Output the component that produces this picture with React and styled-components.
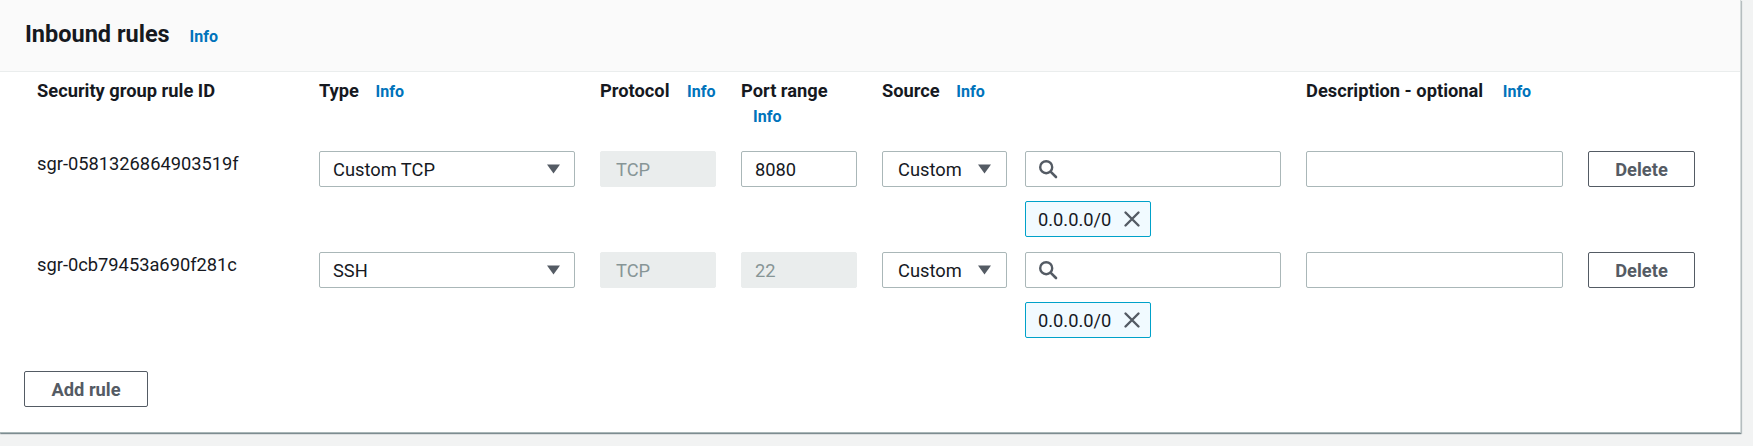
import React from "react";
import styled, { createGlobalStyle } from "styled-components";

const GlobalStyle = createGlobalStyle`
  html, body {
    margin: 0;
    padding: 0;
    background: #f2f3f3;
  }
  body {
    font-family: Roboto, "Liberation Sans", sans-serif;
    color: #16191f;
    font-size: 18.3px;
    line-height: 25px;
  }
`;

const Page = styled.div`
  width: 1753px;
  height: 446px;
  overflow: hidden;
  background: #f2f3f3;
`;

const Panel = styled.section`
  width: 1741px;
  background: #ffffff;
  box-shadow: 0 1px 1px 0 rgba(0, 28, 36, 0.35), 1px 1px 1px 0 rgba(0, 28, 36, 0.2);
  border-bottom: 1px solid #aab7b8;
  border-right: 1px solid #d5dbdb;
  box-sizing: border-box;
`;

const Header = styled.header`
  height: 72px;
  box-sizing: border-box;
  background: #fafafa;
  border-bottom: 1px solid #eaeded;
  display: flex;
  align-items: center;
  padding-left: 25px;
`;

const Title = styled.h2`
  margin: 0;
  font-size: 23.5px;
  line-height: 28px;
  font-weight: 700;
  color: #16191f;
`;

const Info = styled.a`
  display: inline-block;
  margin-left: ${(p) => p.$offset ?? 12}px;
  font-size: 16px;
  font-weight: 700;
  color: #0073bb;
  text-decoration: none;
  cursor: pointer;
`;

const Body = styled.div`
  padding: 6px 0 25px 0;
`;

const Table = styled.div`
  padding-left: 37px;
  display: flex;
  flex-direction: column;
`;

const Row = styled.div`
  display: grid;
  grid-template-columns: 257px 256px 116px 116px 399px 257px 107px;
  column-gap: 25px;
  align-items: start;
  margin-top: ${(p) => p.$gap || 0}px;
`;

const HeadCell = styled.div`
  font-weight: 700;
  white-space: ${(p) => (p.$stack ? "normal" : "nowrap")};
  line-height: 25px;
  height: ${(p) => (p.$stack ? 50 : 25)}px;
`;

const IdText = styled.div`
  line-height: 25px;
`;

const Field = styled.div`
  height: 36px;
  box-sizing: border-box;
  border: 1px solid ${(p) => (p.$disabled ? "#eaeded" : "#aab7b8")};
  background: ${(p) => (p.$disabled ? "#eaeded" : "#ffffff")};
  color: ${(p) => (p.$disabled ? "#879596" : "#16191f")};
  border-radius: 2px;
  display: flex;
  align-items: center;
  padding: 0 ${(p) => p.$padRight ?? 13}px 0 ${(p) => p.$padLeft ?? 13}px;
  gap: 8px;
`;

const FieldText = styled.span`
  flex: 1;
  white-space: nowrap;
`;

const SourceCell = styled.div`
  display: grid;
  grid-template-columns: 125px 256px;
  column-gap: 18px;
  row-gap: 14px;
`;

const Token = styled.div`
  grid-column: 2;
  justify-self: start;
  height: 36px;
  box-sizing: border-box;
  width: 126px;
  border: 1px solid #00a1c9;
  background: #f1faff;
  border-radius: 2px;
  display: flex;
  align-items: center;
  padding: 0 9px 0 12px;
  justify-content: space-between;
  color: #16191f;
`;

const Button = styled.button`
  height: 36px;
  box-sizing: border-box;
  border: 1px solid #545b64;
  border-radius: 2px;
  background: #ffffff;
  color: #545b64;
  font-family: Roboto, "Liberation Sans", sans-serif;
  font-size: 18.3px;
  font-weight: 700;
  padding: 0 ${(p) => p.$padX || 26}px;
  width: ${(p) => (p.$width ? `${p.$width}px` : "auto")};
  cursor: pointer;
`;

const Footer = styled.div`
  margin-top: 33px;
  padding-left: 24px;
`;

const Caret = () => (
  <svg width="13" height="10" viewBox="0 0 13 10" aria-hidden="true">
    <polygon points="0,0.5 13,0.5 6.5,9.5" fill="#545b64" />
  </svg>
);

const SearchIcon = () => (
  <svg width="20" height="20" viewBox="0 0 20 20" aria-hidden="true">
    <circle cx="8.2" cy="8.2" r="6" fill="none" stroke="#545b64" strokeWidth="2.4" />
    <line x1="12.8" y1="12.8" x2="18" y2="18" stroke="#545b64" strokeWidth="2.6" strokeLinecap="round" />
  </svg>
);

const CloseIcon = () => (
  <svg width="18" height="18" viewBox="0 0 18 18" aria-hidden="true">
    <path d="M2.5 2.5 L15.5 15.5 M15.5 2.5 L2.5 15.5" stroke="#545b64" strokeWidth="2.4" strokeLinecap="round" />
  </svg>
);

const rules = [
  { id: "sgr-0581326864903519f", type: "Custom TCP", protocol: "TCP", port: "8080", portDisabled: false },
  { id: "sgr-0cb79453a690f281c", type: "SSH", protocol: "TCP", port: "22", portDisabled: true },
];

export default function App() {
  return (
    <Page>
      <GlobalStyle />
      <Panel>
        <Header>
          <Title>
            Inbound rules <Info $offset={14}>Info</Info>
          </Title>
        </Header>
        <Body>
          <Table>
            <Row>
              <HeadCell>Security group rule ID</HeadCell>
              <HeadCell>
                Type <Info>Info</Info>
              </HeadCell>
              <HeadCell>
                Protocol <Info $offset={13}>Info</Info>
              </HeadCell>
              <HeadCell $stack>
                Port range <Info>Info</Info>
              </HeadCell>
              <HeadCell>
                Source <Info>Info</Info>
              </HeadCell>
              <HeadCell>
                Description - optional <Info $offset={15}>Info</Info>
              </HeadCell>
              <div />
            </Row>
            {rules.map((r, i) => (
              <Row key={r.id} $gap={i === 0 ? 23 : 15}>
                <IdText>{r.id}</IdText>
                <Field $padRight={14}>
                  <FieldText>{r.type}</FieldText>
                  <Caret />
                </Field>
                <Field $disabled $padLeft={15}>
                  <FieldText>{r.protocol}</FieldText>
                </Field>
                <Field $disabled={r.portDisabled}>
                  <FieldText>{r.port}</FieldText>
                </Field>
                <SourceCell>
                  <Field $padLeft={15} $padRight={15}>
                    <FieldText>Custom</FieldText>
                    <Caret />
                  </Field>
                  <Field $padLeft={12}>
                    <SearchIcon />
                  </Field>
                  <Token>
                    <span>0.0.0.0/0</span>
                    <CloseIcon />
                  </Token>
                </SourceCell>
                <Field />
                <Button $width={107} $padX={0}>Delete</Button>
              </Row>
            ))}
          </Table>
          <Footer>
            <Button $width={124} $padX={0}>Add rule</Button>
          </Footer>
        </Body>
      </Panel>
    </Page>
  );
}
